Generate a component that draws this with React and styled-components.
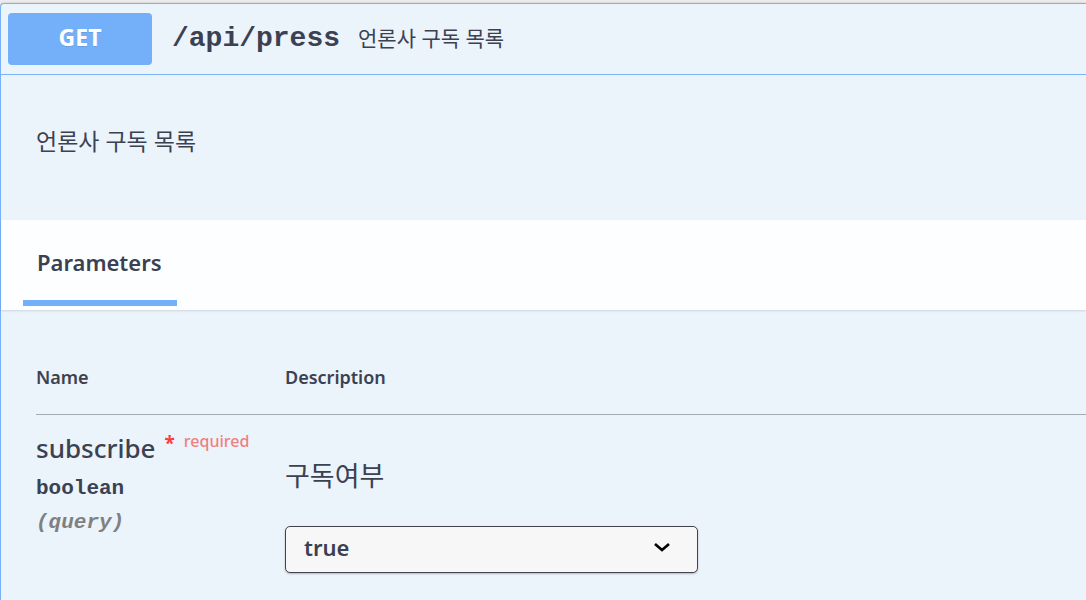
import React from "react";
import styled, { createGlobalStyle } from "styled-components";

const GlobalStyle = createGlobalStyle`
  body {
    margin: 0;
    background: #ededed;
    font-family: "Noto Sans", "Noto Sans CJK KR", sans-serif;
    color: #3b4151;
    overflow: hidden;
  }
`;

const OpBlock = styled.div`
  margin-top: 3px;
  height: 600px;
  background: #ebf3fb;
  border: 1px solid #76b1f9;
  border-right: none;
  border-radius: 4px 0 0 0;
  box-shadow: 0 0 3px rgba(0, 0, 0, 0.15);
`;

const Summary = styled.div`
  display: flex;
  align-items: center;
  height: 70px;
  padding: 0 7px;
  border-bottom: 1px solid #7ab4fa;
`;

const Method = styled.div`
  width: 144px;
  height: 52px;
  border-radius: 4px;
  background: #73b0f9;
  color: #fff;
  font-size: 23px;
  font-weight: 700;
  display: flex;
  align-items: center;
  justify-content: center;
  padding-bottom: 4px;
  box-sizing: border-box;
  text-shadow: 0 1px 0 rgba(0, 0, 0, 0.1);
`;

const Path = styled.span`
  margin-left: 20px;
  font-family: "Liberation Mono", monospace;
  font-weight: 700;
  font-size: 28px;
  color: #3b4151;
  margin-bottom: 2px;
`;

const SummaryText = styled.span`
  margin-left: 18px;
  font-size: 21px;
  color: #3b4151;
  margin-bottom: 4px;
`;

const Description = styled.div`
  height: 145px;
  padding: 0 35px 16px;
  box-sizing: border-box;
  display: flex;
  align-items: center;
  font-size: 23px;
`;

const TabHeader = styled.div`
  height: 90px;
  padding: 0 22px;
  display: flex;
  align-items: stretch;
  background: rgba(255, 255, 255, 0.85);
  box-shadow: 0 1px 2px rgba(0, 0, 0, 0.12);
`;

const Tab = styled.div`
  width: 154px;
  padding-left: 14px;
  box-sizing: border-box;
  font-size: 22px;
  font-weight: 600;
  display: flex;
  flex-direction: column;
  justify-content: space-between;
  padding-top: 27px;
  padding-bottom: 4px;
  &::after {
    content: "";
    display: block;
    height: 6px;
    margin-left: -14px;
    background: ${(p) => (p.$active ? "#73b0f9" : "transparent")};
  }
`;

const Table = styled.div`
  padding-left: 35px;
`;

const Row = styled.div`
  display: grid;
  grid-template-columns: 249px 1fr;
  border-bottom: ${(p) => (p.$head ? "1px solid #a3abb6" : "none")};
  padding: ${(p) => (p.$head ? "54px 0 24px" : "16px 0")};
`;

const HeadCell = styled.div`
  font-size: 18px;
  font-weight: 600;
  line-height: 26px;
`;

const ParamName = styled.div`
  font-size: 26px;
  font-weight: 500;
  line-height: 34px;
  display: flex;
  align-items: flex-start;
`;

const Star = styled.span`
  color: #f93e3e;
  font-size: 19px;
  font-weight: 700;
  margin-left: 9px;
  line-height: 24px;
`;

const Required = styled.span`
  color: #f08080;
  font-size: 16px;
  margin-left: 9px;
  line-height: 20px;
`;

const Mono = styled.div`
  font-family: "Liberation Mono", monospace;
  font-weight: 700;
  font-size: 21px;
  line-height: 24px;
  margin-top: ${(p) => p.$top}px;
  color: ${(p) => (p.$muted ? "#808080" : "#3b4151")};
  font-style: ${(p) => (p.$muted ? "italic" : "normal")};
`;

const DescText = styled.div`
  font-size: 27px;
  line-height: 34px;
  margin-top: 28px;
`;

const Select = styled.div`
  margin-top: 33px;
  width: 413px;
  height: 47px;
  box-sizing: border-box;
  border: 1px solid #41444e;
  border-radius: 5px;
  background: #f7f7f7;
  box-shadow: 0 1px 2px rgba(0, 0, 0, 0.25);
  display: flex;
  align-items: center;
  justify-content: space-between;
  padding: 0 26px 6px 18px;
  font-size: 22px;
  font-weight: 600;
`;

export default function App() {
  return (
    <>
      <GlobalStyle />
      <OpBlock>
        <Summary>
          <Method>GET</Method>
          <Path>/api/press</Path>
          <SummaryText>언론사 구독 목록</SummaryText>
        </Summary>
        <Description>언론사 구독 목록</Description>
        <TabHeader>
          <Tab $active>Parameters</Tab>
        </TabHeader>
        <Table>
          <Row $head>
            <HeadCell>Name</HeadCell>
            <HeadCell>Description</HeadCell>
          </Row>
          <Row>
            <div>
              <ParamName>
                subscribe
                <Star>*</Star>
                <Required>required</Required>
              </ParamName>
              <Mono $top={12}>boolean</Mono>
              <Mono $top={10} $muted>(query)</Mono>
            </div>
            <div>
              <DescText>구독여부</DescText>
              <Select>
                <span>true</span>
                <svg width="18" height="12" viewBox="0 0 18 12">
                  <path d="M2 3l7 6 7-6" fill="none" stroke="#000" strokeWidth="2.6" />
                </svg>
              </Select>
            </div>
          </Row>
        </Table>
      </OpBlock>
    </>
  );
}
